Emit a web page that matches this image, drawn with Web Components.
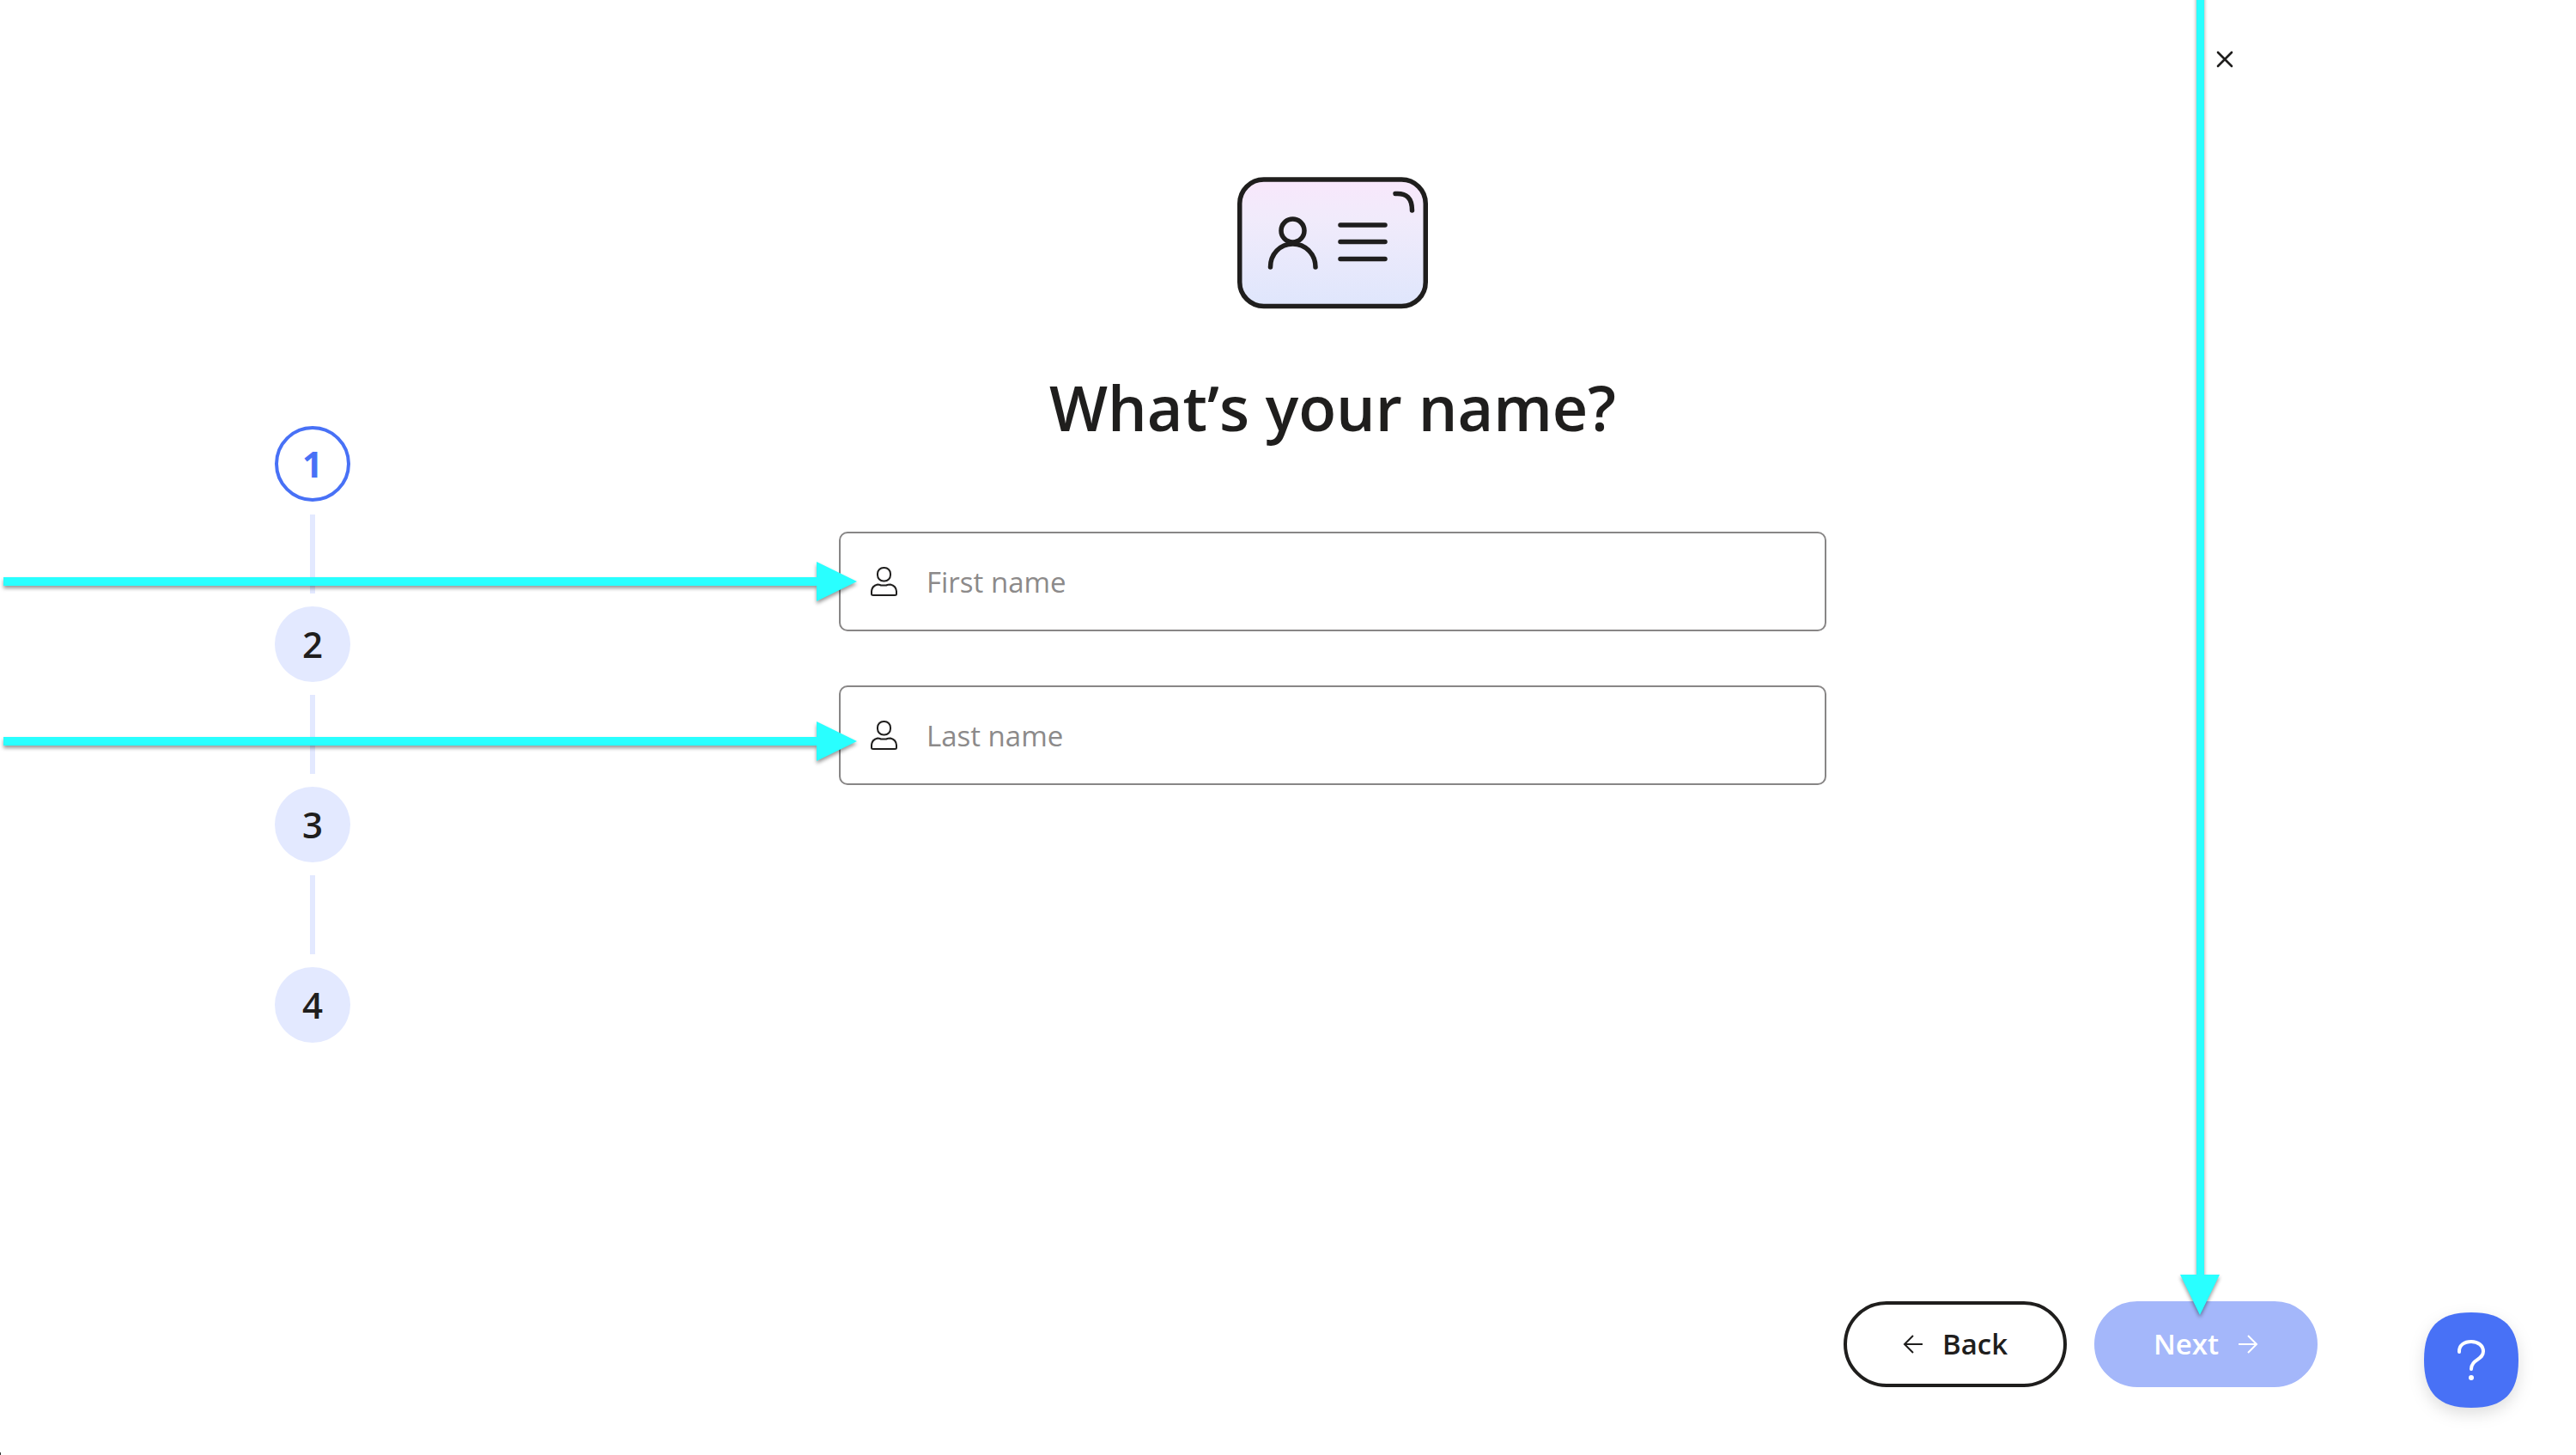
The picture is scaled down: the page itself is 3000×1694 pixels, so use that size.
<!DOCTYPE html>
<html lang="en">
<head>
<meta charset="utf-8">
<title>What’s your name?</title>
<style>
  :root {
    --ink: #1f1e1d;
    --blue: #4871f6;
    --pale: #e3e9ff;
    --muted: #8c8a8a;
    --marker: #29ffff;
  }
  body { margin: 0; background: #fff; color: var(--ink); font-family: "Open Sans", "Noto Sans", sans-serif; }
</style>
</head>
<body>
<signup-page></signup-page>
<script>
class BaseElement extends HTMLElement {
  render(html) {
    const root = this.attachShadow({ mode: "open" });
    const t = document.createElement("template");
    t.innerHTML = `<style>*{box-sizing:border-box}button,input{font:inherit;color:inherit;margin:0}</style>` + html;
    root.append(t.content.cloneNode(true));
  }
}

customElements.define("step-item", class extends BaseElement {
  connectedCallback() {
    this.render(`
      <style>
        :host { display: flex; flex-direction: column; align-items: center; gap: 15px; }
        .dot { width: 88px; height: 88px; border-radius: 50%; background: var(--pale); display: flex; align-items: center; justify-content: center; font-size: 42px; line-height: 48px; font-weight: 600; }
        :host([current]) .dot { background: #fff; border: 4px solid var(--blue); color: var(--blue); font-weight: 700; }
        .line { width: 6px; height: 92px; background: var(--pale); }
        :host([last]) .line { display: none; }
      </style>
      <div class="dot"><slot></slot></div><div class="line"></div>`);
  }
});

customElements.define("step-list", class extends BaseElement {
  connectedCallback() {
    this.render(`
      <style>:host { display: flex; flex-direction: column; align-items: center; gap: 15px; }</style>
      <slot></slot>`);
  }
});

customElements.define("id-card-art", class extends BaseElement {
  connectedCallback() {
    this.render(`
      <style>:host { display: block; } svg { display: block; }</style>
      <svg width="222" height="154" viewBox="0 0 222 154" fill="none" stroke="#1f1e1d" aria-hidden="true">
        <defs><linearGradient id="g" x1="0" y1="0" x2="0" y2="1"><stop offset="0" stop-color="#f8e7fb"/><stop offset=".3" stop-color="#f1ebfb"/><stop offset="1" stop-color="#dfe6fc"/></linearGradient></defs>
        <rect x="2.750" y="3" width="216.500" height="147.500" rx="28" fill="url(#g)" stroke-width="5.500"/>
        <g stroke-width="5.500" stroke-linecap="round">
          <ellipse cx="64.500" cy="62.500" rx="13.500" ry="13.500"/>
          <path d="M38.500 105c0-15 11-27 26-27s26.500 12 26.500 27"/>
          <path d="M120 56h52M120 75.500h52M120 95.500h52"/>
          <path d="M184 19.500c13-1 19.500 5 19.500 19.500"/>
        </g>
      </svg>`);
  }
});

customElements.define("text-field", class extends BaseElement {
  connectedCallback() {
    const label = this.getAttribute("label");
    this.render(`
      <style>
        :host { display: block; }
        .box { display: flex; align-items: center; height: 116px; border: 2px solid #888686; border-radius: 10px; padding: 0 34px; gap: 34px; background: #fff; }
        label { display: block; flex: none; }
        svg { display: block; }
        input { flex: 1; min-width: 0; height: 100%; border: 0; padding: 0; outline: 0; background: transparent; font-size: 33px; line-height: 48px; }
        input::placeholder { color: var(--muted); opacity: 1; }
      </style>
      <div class="box">
        <label for="field" aria-label="${label}">
          <svg width="32" height="36" viewBox="0 0 32 36" fill="none" stroke="#1f1e1d" stroke-width="2" stroke-linejoin="round">
            <rect x="9" y="2" width="15" height="15.500" rx="7"/>
            <path d="M9 21.500q2 0 4 1h6q2-1 5-1 6.500 1.500 7 8v3q0 1.500-2 1.500H4q-2 0-2-1.500v-3q.5-6.500 7-8z"/>
          </svg>
        </label>
        <input id="field" type="text" placeholder="${label}" aria-label="${label}">
      </div>`);
  }
});

customElements.define("pill-button", class extends BaseElement {
  connectedCallback() {
    this.render(`
      <style>
        :host { display: block; }
        button { width: 260px; height: 100px; display: flex; align-items: center; justify-content: center; gap: 22px; border: 4px solid var(--ink); border-radius: 50px; background: #fff; padding: 0; font-size: 33px; line-height: 48px; font-weight: 600; }
        :host([primary]) button { background: #a4b7fa; border-color: #a4b7fa; color: #fff; }
        ::slotted(svg) { display: block; flex: none; }
      </style>
      <button type="button"><slot></slot></button>`);
  }
});

customElements.define("close-button", class extends BaseElement {
  connectedCallback() {
    this.render(`
      <style>
        :host { display: block; }
        button { display: block; border: 0; background: none; padding: 12px; }
        svg { display: block; }
      </style>
      <button type="button" aria-label="Close">
        <svg width="20" height="20" viewBox="0 0 20 20" stroke="#1f1e1d" stroke-width="2.600" stroke-linecap="round"><path d="M2 2l16 16M18 2L2 18"/></svg>
      </button>`);
  }
});

customElements.define("help-button", class extends BaseElement {
  connectedCallback() {
    this.render(`
      <style>
        :host { display: block; }
        button { display: block; border: 0; background: none; padding: 0; filter: drop-shadow(0 7px 9px rgba(0,0,0,.13)); }
        svg { display: block; }
      </style>
      <button type="button" aria-label="Help">
        <svg width="110" height="111" viewBox="0 0 110 111" fill="none">
          <path fill="#4871f6" d="M55 0C93 0 110 17 110 55.500S93 111 55 111 0 94 0 55.500 17 0 55 0z"/>
          <path d="M41 46c-.5-8 6-12 14-12s14 4.500 14 11.500c0 10-14 9-14 20.500" stroke="#fff" stroke-width="4" stroke-linecap="round"/>
          <circle cx="55" cy="76" r="3" fill="#fff"/>
        </svg>
      </button>`);
  }
});

customElements.define("pointer-arrow", class extends BaseElement {
  connectedCallback() {
    this.render(`
      <style>
        :host { display: flex; align-items: center; filter: drop-shadow(0 3px 2px rgba(0,0,0,.4)); pointer-events: none; }
        .shaft { flex: 1; height: 10px; background: var(--marker); }
        .head { flex: none; width: 47px; height: 46px; background: var(--marker); clip-path: polygon(0 0, 100% 50%, 0 100%); }
        :host([down]) { flex-direction: column; }
        :host([down]) .shaft { width: 9px; height: auto; }
        :host([down]) .head { width: 46px; height: 47px; clip-path: polygon(0 0, 100% 0, 50% 100%); }
      </style>
      <div class="shaft"></div><div class="head"></div>`);
  }
});

customElements.define("signup-page", class extends BaseElement {
  connectedCallback() {
    this.render(`
      <style>
        :host { position: relative; display: flex; flex-direction: column; min-height: 100vh; overflow: hidden; }
        header { display: flex; justify-content: flex-end; padding: 47px 387px 0 0; height: 206px; }
        main { flex: 1; display: grid; grid-template-columns: 728px 1fr 624px; align-items: start; }
        step-list { padding-top: 290px; }
        form { justify-self: center; width: 70%; max-width: 1150px; display: flex; flex-direction: column; align-items: center; }
        h1 { margin: 55px 0 86px; font-size: 72px; line-height: 118px; font-weight: 600; white-space: nowrap; }
        .fields { align-self: stretch; display: flex; flex-direction: column; gap: 63px; }
        footer { display: flex; justify-content: flex-end; gap: 32px; padding: 0 301px 79px 0; }
        help-button { position: absolute; right: 67px; bottom: 55px; }
        .first { position: absolute; left: 4px; top: 654px; width: 994px; }
        .last { position: absolute; left: 4px; top: 840px; width: 994px; }
        .next { position: absolute; right: 415px; top: -10px; bottom: 163px; }
        .speck { position: absolute; left: 0; bottom: 0; width: 1px; height: 3px; background: #333; }
      </style>
      <header><close-button></close-button></header>
      <main>
        <step-list>
          <step-item current>1</step-item>
          <step-item>2</step-item>
          <step-item>3</step-item>
          <step-item last>4</step-item>
        </step-list>
        <form>
          <id-card-art></id-card-art>
          <h1>What’s your name?</h1>
          <div class="fields">
            <text-field label="First name"></text-field>
            <text-field label="Last name"></text-field>
          </div>
        </form>
      </main>
      <footer>
        <pill-button>
          <svg width="24" height="24" viewBox="0 0 24 24" fill="none" stroke="currentColor" stroke-width="2"><path d="M23 12H2M12 2L2 12l10 10"/></svg>
          <span>Back</span>
        </pill-button>
        <pill-button primary>
          <span>Next</span>
          <svg width="24" height="24" viewBox="0 0 24 24" fill="none" stroke="currentColor" stroke-width="2"><path d="M1 12h21M12 2l10 10-10 10"/></svg>
        </pill-button>
      </footer>
      <help-button></help-button>
      <pointer-arrow class="first"></pointer-arrow>
      <pointer-arrow class="last"></pointer-arrow>
      <pointer-arrow class="next" down></pointer-arrow>
      <div class="speck"></div>`);
  }
});
</script>
</body>
</html>
